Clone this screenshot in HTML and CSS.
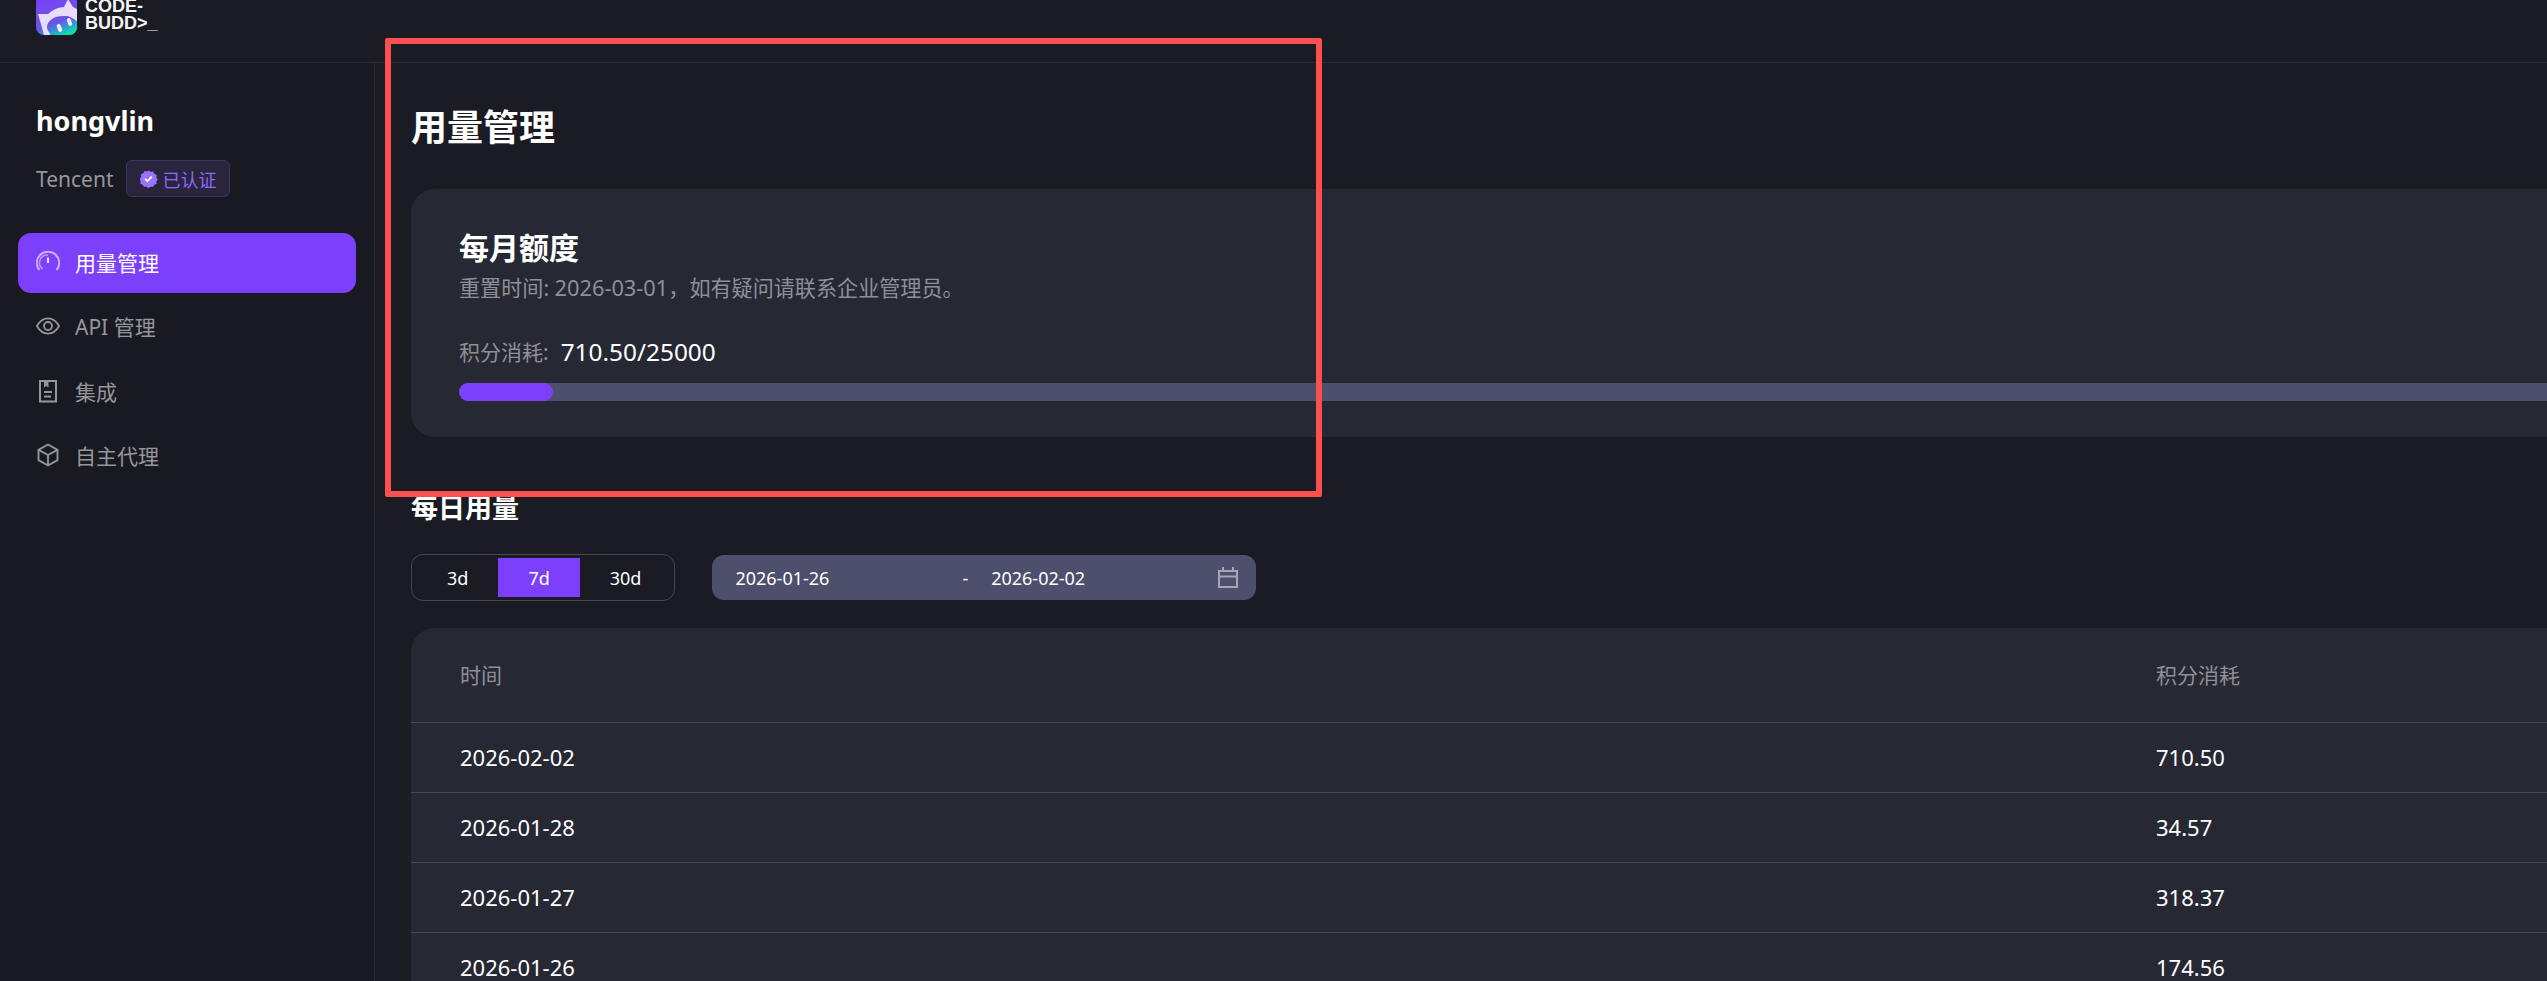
FILE: index.html
```html
<!DOCTYPE html>
<html lang="zh-CN">
<head>
<meta charset="utf-8">
<title>用量管理</title>
<link rel="stylesheet" href="styles.css">
</head>
<body>
<div class="app">
  <header class="topbar">
    <div class="brand">
      <svg class="brand-mark" viewBox="0 0 41 41" width="41" height="41">
        <defs>
          <linearGradient id="lg" gradientUnits="userSpaceOnUse" x1="10" y1="0" x2="27" y2="41">
            <stop offset="0" stop-color="#7b3ff8"/>
            <stop offset="0.68" stop-color="#6a55e8"/>
            <stop offset="0.86" stop-color="#2f9fd6"/>
            <stop offset="1" stop-color="#0cdcae"/>
          </linearGradient>
          <clipPath id="lc"><rect width="41" height="41" rx="8"/></clipPath>
        </defs>
        <g clip-path="url(#lc)">
          <rect width="41" height="41" fill="url(#lg)"/>
          <path d="M2 20 L12 20 Q20 13 28 13 L32 5 L37 13 L41 15 L41 28 L32 22 L18 24 L13 33 L14 41 L8 41 Q5 30 2 20Z" fill="#e7dcfc"/>
          <ellipse cx="27" cy="33" rx="16" ry="11" fill="url(#lg)"/>
          <rect x="21.5" y="30" width="4" height="8" rx="2" transform="rotate(-24 23.5 34)" fill="#f3eefe"/>
          <rect x="31.5" y="24" width="4" height="8" rx="2" transform="rotate(-20 33.5 28)" fill="#f3eefe"/>
        </g>
      </svg>
      <div class="wordmark"><span>CODE-</span><span>BUDD&gt;_</span></div>
    </div>
  </header>
  <div class="layout">
    <aside class="sidebar">
      <div class="user-name">hongvlin</div>
      <div class="org-row">
        <span class="org">Tencent</span>
        <span class="badge">
          <svg class="badge-icon" viewBox="0 0 20 20" width="19" height="19">
            <path d="M10 1.5l2.3 1.5 2.7-.4 1.1 2.500 2.500 1.100-.4 2.700 1.500 2.100-1.500 2.300.4 2.300-2.500 1.100-1.100 2.100-2.700-.2-2.300 1.300-2.300-1.300-2.700.2-1.100-2.100-2.500-1.100.4-2.300L.8 10.500l1.500-2.100-.4-2.700 2.500-1.100L5.900 2.100l2.700.4z" fill="#9a72fb"/>
            <path d="M6.3 10.3l2.6 2.500 4.600-4.700" fill="none" stroke="#fff" stroke-width="1.8"/>
          </svg>
          已认证
        </span>
      </div>
      <nav class="nav">
        <a class="nav-item is-active">
          <svg class="nav-icon" viewBox="0 0 24 24" width="24" height="24" fill="none" stroke="#c8aefb">
            <path d="M3.4 20 A11.2 11.2 0 1 1 20.6 20" stroke-width="2"/>
            <path d="M6.8 19 A7.6 7.6 0 0 1 12 5.2" stroke-width="1.6" opacity=".75"/>
            <path d="M12 7.5V13" stroke-width="2.2" stroke="#e6dafd"/>
          </svg>
          <span>用量管理</span>
        </a>
        <a class="nav-item">
          <svg class="nav-icon" viewBox="0 0 24 24" width="24" height="24" fill="none" stroke="#96969a" stroke-width="1.8">
            <path d="M.9 12C3.6 7.4 7.4 4.4 12 4.400S20.400 7.400 23.100 12C20.400 16.600 16.600 19.600 12 19.600S3.600 16.600.9 12Z"/>
            <circle cx="12" cy="12" r="4"/>
          </svg>
          <span>API 管理</span>
        </a>
        <a class="nav-item">
          <svg class="nav-icon" viewBox="0 0 24 24" width="24" height="24" fill="none" stroke="#96969a" stroke-width="2">
            <path d="M4 2h16v20.500H4z"/>
            <path d="M8 2h4.500v6.500L10.200 7 8 8.500z" fill="#96969a" stroke="none"/>
            <path d="M8 13h8M8 17.500h7"/>
          </svg>
          <span>集成</span>
        </a>
        <a class="nav-item">
          <svg class="nav-icon" viewBox="0 0 24 24" width="24" height="24" fill="none" stroke="#96969a" stroke-width="1.900" stroke-linejoin="round">
            <path d="M12 1.500l9.500 5.300v10.400L12 22.500l-9.500-5.300V6.800z"/>
            <path d="M2.500 6.800L12 12l9.500-5.200M12 12v10.500"/>
          </svg>
          <span>自主代理</span>
        </a>
      </nav>
    </aside>
    <main class="main">
      <h1 class="page-title">用量管理</h1>
      <section class="card quota">
        <h2 class="quota-title">每月额度</h2>
        <p class="quota-note">重置时间: <span class="num">2026-03-01</span>，如有疑问请联系企业管理员。</p>
        <div class="usage-row">
          <span class="usage-label">积分消耗:</span>
          <span class="usage-value">710.50/25000</span>
        </div>
        <div class="track"><div class="fill"></div></div>
      </section>
      <h3 class="section-title">每日用量</h3>
      <div class="controls">
        <div class="segment">
          <button class="seg-btn">3d</button>
          <button class="seg-btn is-active">7d</button>
          <button class="seg-btn">30d</button>
        </div>
        <div class="range">
          <span class="range-date">2026-01-26</span>
          <span class="range-sep">-</span>
          <span class="range-date">2026-02-02</span>
          <svg class="range-icon" viewBox="0 0 20 21" width="20" height="21" fill="none" stroke="#a6a6b8" stroke-width="2">
            <path d="M1 4h18v16H1zM1 9.500h18M5 0v4M15 0v4"/>
          </svg>
        </div>
      </div>
      <section class="card table-card">
        <table class="usage-table">
          <thead>
            <tr><th class="col-time">时间</th><th>积分消耗</th></tr>
          </thead>
          <tbody>
            <tr><td>2026-02-02</td><td>710.50</td></tr>
            <tr><td>2026-01-28</td><td>34.57</td></tr>
            <tr><td>2026-01-27</td><td>318.37</td></tr>
            <tr><td>2026-01-26</td><td>174.56</td></tr>
          </tbody>
        </table>
      </section>
    </main>
  </div>
</div>
<div class="annotation"></div>
</body>
</html>
```
FILE: styles.css
```css
* { box-sizing: border-box; }
html, body { margin: 0; height: 100%; }
body {
  position: relative;
  overflow: hidden;
  background: #1a1b23;
  color: #fff;
  font-family: "Noto Sans", "Noto Sans CJK SC", sans-serif;
  font-size: 21px;
}
.app { width: 2800px; height: 981px; }
.topbar {
  display: flex;
  align-items: flex-start;
  height: 63px;
  padding-left: 36px;
  border-bottom: 1px solid #272833;
}
.brand { display: flex; align-items: center; gap: 8px; margin-top: -6px; }
.brand-mark { display: block; flex: none; }
.wordmark {
  display: flex;
  flex-direction: column;
  font-family: "Liberation Sans", sans-serif;
  font-weight: 700;
  font-size: 18px;
  line-height: 17px;
  color: #f5f5f5;
}
.layout { display: flex; align-items: stretch; height: 918px; }
.sidebar {
  flex: none;
  width: 375px;
  padding: 42px 18px 0;
  border-right: 1px solid #24252e;
  background: #191a21;
}
.user-name {
  padding-left: 18px;
  font-size: 27px;
  line-height: 32px;
  font-weight: 700;
}
.org-row {
  display: flex;
  align-items: center;
  gap: 12px;
  margin-top: 23px;
  padding-left: 18px;
}
.org { color: #96969e; font-size: 21px; }
.badge {
  display: flex;
  align-items: center;
  gap: 5px;
  height: 37px;
  padding: 0 12px;
  border: 1px solid #3d3160;
  border-radius: 6px;
  background: #29253d;
  color: #8f66fb;
  font-size: 18px;
}
.badge-icon { display: block; flex: none; }
.nav { display: flex; flex-direction: column; gap: 4.5px; margin-top: 36px; }
.nav-item {
  display: flex;
  align-items: center;
  gap: 15px;
  height: 60px;
  padding: 0 0 3px 18px;
  border-radius: 13px;
  color: #96969c;
  font-size: 21px;
}
.nav-item.is-active { background: #7c3ffb; color: #fff; }
.nav-icon { display: block; flex: none; }
.main { flex: none; width: 2400px; padding: 47px 0 0 36px; }
.page-title {
  margin: 0 0 43px;
  font-size: 36px;
  line-height: 36px;
  font-weight: 700;
}
.card { background: #262833; border-radius: 24px; }
.quota { padding: 44px 48px 36px; }
.quota-title { margin: 0; font-size: 30px; line-height: 30px; font-weight: 700; }
.quota-note {
  margin: 10px 0 0;
  color: #8f8f96;
  font-size: 21.100px;
  line-height: 30px;
}
.num { font-size: 21.800px; }
.usage-row { display: flex; align-items: center; gap: 12px; height: 36px; margin-top: 30px; }
.usage-label { color: #8f8f96; }
.usage-value { font-size: 24.400px; }
.track { height: 18px; margin-top: 14px; border-radius: 9px; background: #4e4f6c; }
.fill { width: 94px; height: 18px; border-radius: 9px; background: #7c3ffb; }
.section-title {
  margin: 57px 0 33px;
  font-size: 27px;
  line-height: 27px;
  font-weight: 700;
}
.controls { display: flex; align-items: center; gap: 37px; margin-bottom: 27px; }
.segment {
  display: flex;
  height: 47px;
  padding: 3px 3px 3px 5px;
  border: 1px solid #46464e;
  border-radius: 12px;
}
.seg-btn {
  padding: 0 30px;
  border: 0;
  background: none;
  color: #fff;
  font: inherit;
  font-size: 18px;
}
.seg-btn.is-active { background: #7c3ffb; }
.range {
  display: flex;
  align-items: center;
  width: 544px;
  height: 45px;
  padding: 0 18px 0 23px;
  border-radius: 12px;
  background: #4e4f6c;
  font-size: 18px;
}
.range-sep { margin: 0 23px 0 133px; }
.range-icon { display: block; flex: none; margin-left: auto; }
.usage-table { width: 100%; border-collapse: collapse; table-layout: fixed; }
.usage-table th, .usage-table td { padding: 0 0 0 49px; text-align: left; }
.usage-table th {
  height: 94px;
  padding-bottom: 1px;
  border-bottom: 1px solid #47474f;
  color: #8f8f96;
  font-size: 21px;
  font-weight: 400;
}
.col-time { width: 1696px; }
.usage-table td {
  height: 70px;
  border-bottom: 1px solid #47474f;
  font-size: 22px;
}
.annotation {
  position: absolute;
  left: 385px;
  top: 38px;
  width: 937px;
  height: 459px;
  border: 6px solid #fb5050;
  border-radius: 2px;
}
```
